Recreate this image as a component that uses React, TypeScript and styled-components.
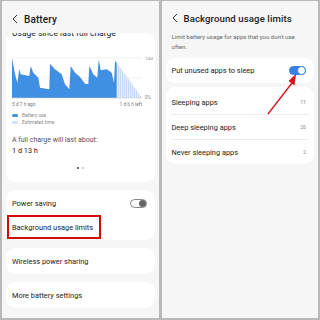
import styled, { createGlobalStyle } from 'styled-components'

const Global = createGlobalStyle`
  html, body {
    margin: 0;
    padding: 0;
    background: #b9b9b9;
  }
  body {
    font-family: Roboto, "Noto Sans", "Liberation Sans", sans-serif;
    -webkit-font-smoothing: antialiased;
  }
`

const Frame = styled.div`
  width: 320px;
  height: 320px;
  box-sizing: border-box;
  padding: 1px 2px 2px 2px;
  display: grid;
  grid-template-columns: 1fr 1fr;
  gap: 3px;
  background: #b9b9b9;
`

const Screen = styled.div`
  position: relative;
  display: flex;
  flex-direction: column;
  background: #f6f6f6;
  overflow: hidden;
`

const Header = styled.div<{ $h: number }>`
  height: ${(p) => p.$h}px;
  flex: none;
  display: flex;
  align-items: center;
  padding: 4px 0 0 10px;
  box-sizing: border-box;
  gap: 6px;
  background: #f6f6f6;
  position: relative;
  z-index: 1;
`

const Back = styled.svg`
  width: 6px;
  height: 10px;
  flex: none;
`

const Title = styled.div<{ $size: number }>`
  font-size: ${(p) => p.$size}px;
  font-weight: 500;
  color: #1b1b1b;
  letter-spacing: 0.1px;
`

const Body = styled.div`
  flex: 1;
  display: flex;
  flex-direction: column;
  gap: 8px;
  padding: 0 4px;
  overflow: hidden;
`

const Card = styled.div<{ $pad?: string; $mt?: number }>`
  background: #ffffff;
  border-radius: 9px;
  padding: ${(p) => p.$pad || '1px 0'};
  margin-top: ${(p) => p.$mt || 0}px;
  display: flex;
  flex-direction: column;
`

const CardTitle = styled.div`
  font-size: 8.5px;
  line-height: 10px;
  margin-top: -5px;
  color: #222;
`

const ChartSvg = styled.svg`
  display: block;
  margin-top: 19px;
`

const AxisRow = styled.div`
  display: flex;
  justify-content: space-between;
  width: 130px;
  margin-top: 3px;
  font-size: 4.8px;
  color: #777;
`

const Legend = styled.div`
  display: flex;
  flex-direction: column;
  gap: 2px;
  margin-top: 6px;
`

const LegendItem = styled.div`
  display: flex;
  align-items: center;
  gap: 4px;
  font-size: 4.8px;
  color: #888;
`

const Swatch = styled.span<{ $c: string }>`
  width: 6px;
  height: 3px;
  border-radius: 2px;
  background: ${(p) => p.$c};
`

const Caption = styled.div`
  margin-top: 11px;
  font-size: 7px;
  color: #555;
`

const Value = styled.div`
  margin-top: 2px;
  font-size: 7.3px;
  color: #222;
`

const Dots = styled.div`
  display: flex;
  justify-content: center;
  gap: 3px;
  margin: 12px 0 13px;
`

const Dot = styled.span<{ $on?: boolean }>`
  width: 2px;
  height: 2px;
  border-radius: 50%;
  background: ${(p) => (p.$on ? '#333' : '#bbb')};
`

const Row = styled.div<{ $h?: number }>`
  height: ${(p) => p.$h || 24}px;
  display: flex;
  align-items: center;
  justify-content: space-between;
  padding: 0 6px;
  font-size: 7.4px;
  color: #222;
`

const Mark = styled.span`
  height: 24px;
  box-sizing: border-box;
  display: flex;
  align-items: center;
  margin-left: -5px;
  padding: 0 6px 0 3px;
  border: 2px solid #d40a0a;
`

const Count = styled.span`
  font-size: 5.2px;
  color: #888;
  margin-right: 2px;
`

const Divider = styled.div`
  height: 1px;
  margin: 0 6px;
  background: #ececec;
`

const Desc = styled.div`
  font-size: 6px;
  line-height: 10px;
  color: #666;
  padding: 0 6px;
  margin: 1px 0 -2px;
`

const Toggle = styled.span<{ $on?: boolean }>`
  position: relative;
  width: 17px;
  height: 9px;
  box-sizing: border-box;
  border-radius: 5px;
  margin-right: 2px;
  border: 1px solid ${(p) => (p.$on ? '#3b7fe6' : '#888')};
  background: ${(p) => (p.$on ? '#3b7fe6' : '#fff')};
`

const Knob = styled.span<{ $on?: boolean }>`
  position: absolute;
  top: ${(p) => (p.$on ? '-1px' : '0')};
  right: ${(p) => (p.$on ? '-1px' : '0')};
  width: ${(p) => (p.$on ? '9px' : '7px')};
  height: ${(p) => (p.$on ? '9px' : '7px')};
  box-sizing: border-box;
  border-radius: 50%;
  background: ${(p) => (p.$on ? '#fff' : '#666')};
  border: ${(p) => (p.$on ? '1.5px solid #3b7fe6' : 'none')};
`

const Arrow = styled.svg`
  position: absolute;
  left: 0;
  top: 0;
  pointer-events: none;
`

const chevron = (
  <Back viewBox="0 0 6 10">
    <path d="M5 1 L1 5 L5 9" fill="none" stroke="#333" strokeWidth="1" />
  </Back>
)

const usage =
  'M0 40 L0 0.3 L3 16 L5.3 24.7 L7.3 11.3 L8.7 16.3 L17.3 18 L18.7 8 L21.3 14.7 L26.3 19.7 L28 29.7 L37.3 31.3 L38 5.7 L43 11.3 L49.7 16.3 L53 26.3 L57.3 31.3 L58.7 8 L63 14.7 L68 19 L73 25.7 L76.3 26.3 L77.3 8 L81.3 16.3 L85.3 19.7 L86.7 1.3 L88.7 12.3 L94.7 11.3 L99.7 14.7 L102 24.7 L103 3 L104.7 4.7 L104.7 40 Z'

const Chart = () => (
  <ChartSvg width="142" height="42" viewBox="0 -1 142 42">
    <defs>
      <pattern id="hatch" width="2" height="2" patternUnits="userSpaceOnUse">
        <rect width="2" height="2" fill="#e3eefb" />
        <rect width="0.8" height="2" fill="#bcd6f4" />
      </pattern>
    </defs>
    <line x1="0" y1="0" x2="130" y2="0" stroke="#e6e6e6" strokeWidth="0.6" />
    <line x1="0" y1="20" x2="130" y2="20" stroke="#e6e6e6" strokeWidth="0.6" />
    <path d="M104.7 4.7 L130 40 L104.7 40 Z" fill="url(#hatch)" />
    <path d={usage} fill="#3f8fe2" />
    <line x1="0" y1="40" x2="130" y2="40" stroke="#cfcfcf" strokeWidth="0.6" />
    <text x="133" y="2" fontSize="4.6" fill="#888">100</text>
    <text x="133" y="40.5" fontSize="4.6" fill="#888">0%</text>
  </ChartSvg>
)

const App = () => (
  <>
    <Global />
    <Frame>
      <Screen>
        <Header $h={32}>
          {chevron}
          <Title $size={10}>Battery</Title>
        </Header>
        <Body>
          <Card $pad="0 6px">
            <CardTitle>Usage since last full charge</CardTitle>
            <Chart />
            <AxisRow>
              <span>5 d 7 h ago</span>
              <span>1 d 6 h left</span>
            </AxisRow>
            <Legend>
              <LegendItem>
                <Swatch $c="#3f8fe2" />
                Battery use
              </LegendItem>
              <LegendItem>
                <Swatch $c="#cfe2f8" />
                Estimated time
              </LegendItem>
            </Legend>
            <Caption>A full charge will last about:</Caption>
            <Value>1 d 13 h</Value>
            <Dots>
              <Dot $on />
              <Dot />
            </Dots>
          </Card>
          <Card>
            <Row>
              <span>Power saving</span>
              <Toggle>
                <Knob />
              </Toggle>
            </Row>
            <Row>
              <Mark>Background usage limits</Mark>
            </Row>
          </Card>
          <Card>
            <Row>Wireless power sharing</Row>
          </Card>
          <Card>
            <Row>More battery settings</Row>
          </Card>
        </Body>
      </Screen>
      <Screen>
        <Header $h={30}>
          {chevron}
          <Title $size={9.6}>Background usage limits</Title>
        </Header>
        <Body>
          <Desc>
            Limit battery usage for apps that you don't use
            <br />
            often.
          </Desc>
          <Card $pad="0">
            <Row $h={25}>
              <span>Put unused apps to sleep</span>
              <Toggle $on>
                <Knob $on />
              </Toggle>
            </Row>
          </Card>
          <Card $pad="3px 0 0" $mt={-4}>
            <Row $h={24}>
              <span>Sleeping apps</span>
              <Count>11</Count>
            </Row>
            <Divider />
            <Row $h={24}>
              <span>Deep sleeping apps</span>
              <Count>26</Count>
            </Row>
            <Divider />
            <Row $h={24}>
              <span>Never sleeping apps</span>
              <Count>2</Count>
            </Row>
          </Card>
        </Body>
        <Arrow width="157" height="320">
          <line x1="106" y1="113" x2="130" y2="82" stroke="#d8111b" strokeWidth="1.3" />
          <path d="M134 73 L126.5 80 L132.5 84.5 Z" fill="#d8111b" />
        </Arrow>
      </Screen>
    </Frame>
  </>
)

export default App
